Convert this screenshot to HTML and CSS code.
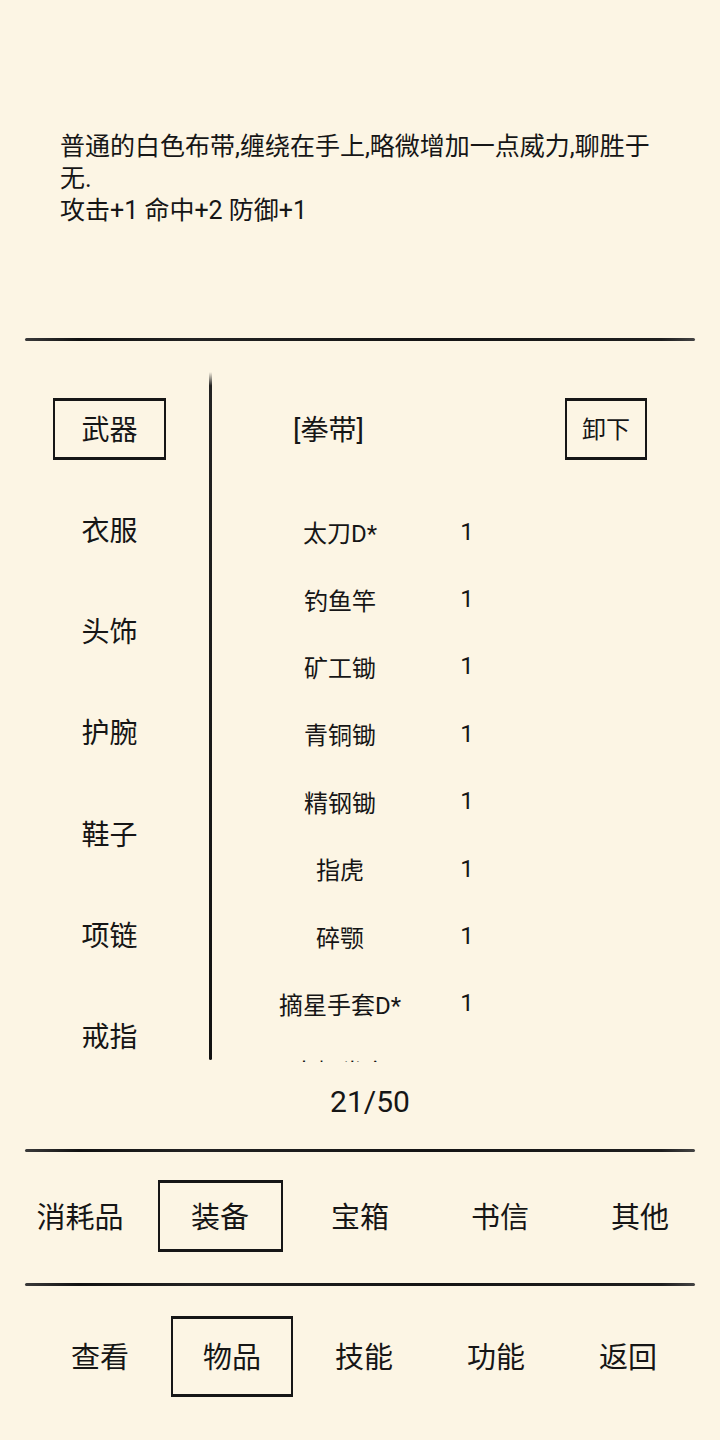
FILE: index.html
```html
<!DOCTYPE html>
<html lang="zh">
<head>
<meta charset="utf-8">
<title>装备</title>
<link rel="stylesheet" href="styles.css">
</head>
<body>
<div class="screen">
  <div class="desc">
    <p>普通的白色布带,缠绕在手上,略微增加一点威力,聊胜于无.</p>
    <p>攻击+1 命中+2 防御+1</p>
  </div>
  <div class="rule"></div>
  <div class="main">
    <div class="panes">
      <div class="cats">
        <div class="cat active">武器</div>
        <div class="cat">衣服</div>
        <div class="cat">头饰</div>
        <div class="cat">护腕</div>
        <div class="cat">鞋子</div>
        <div class="cat">项链</div>
        <div class="cat">戒指</div>
      </div>
      <div class="vline"></div>
      <div class="right">
        <div class="head">
          <span class="equipped">[拳带]</span>
          <span class="btn">卸下</span>
        </div>
        <div class="list">
          <div class="row"><span class="name">太刀D*</span><span class="cnt">1</span></div>
          <div class="row"><span class="name">钓鱼竿</span><span class="cnt">1</span></div>
          <div class="row"><span class="name">矿工锄</span><span class="cnt">1</span></div>
          <div class="row"><span class="name">青铜锄</span><span class="cnt">1</span></div>
          <div class="row"><span class="name">精钢锄</span><span class="cnt">1</span></div>
          <div class="row"><span class="name">指虎</span><span class="cnt">1</span></div>
          <div class="row"><span class="name">碎颚</span><span class="cnt">1</span></div>
          <div class="row"><span class="name">摘星手套D*</span><span class="cnt">1</span></div>
          <div class="row"><span class="name">太极拳套</span><span class="cnt">1</span></div>
        </div>
      </div>
    </div>
    <div class="counter">21/50</div>
  </div>
  <div class="rule"></div>
  <div class="tabs tabs1">
    <div class="tab">消耗品</div>
    <div class="tab active">装备</div>
    <div class="tab">宝箱</div>
    <div class="tab">书信</div>
    <div class="tab">其他</div>
  </div>
  <div class="rule"></div>
  <div class="tabs tabs2">
    <div class="tab">查看</div>
    <div class="tab active">物品</div>
    <div class="tab">技能</div>
    <div class="tab">功能</div>
    <div class="tab">返回</div>
  </div>
</div>
</body>
</html>
```

FILE: styles.css
```css
html, body {
  margin: 0;
  padding: 0;
  background: #fcf5e4;
}
body {
  font-family: Roboto, "Noto Sans CJK SC", sans-serif;
  color: #161616;
}
.screen {
  width: 720px;
  height: 1440px;
  overflow: hidden;
  background: #fcf5e4;
}
.desc {
  box-sizing: border-box;
  height: 338px;
  padding: 131px 0 0 60px;
  width: 660px;
  font-size: 25px;
  line-height: 32px;
}
.desc p {
  margin: 0;
}
.rule {
  height: 3px;
  margin: 0 25px;
  background: linear-gradient(90deg, #3a3a3a 0%, #111 8%, #222 25%, #141414 60%, #1e1e1e 95%, #444 100%);
  border-radius: 2px;
}
.main {
  padding-top: 31px;
}
.panes {
  display: flex;
  height: 691px;
}
.cats {
  box-sizing: border-box;
  width: 209px;
  padding: 26px 0 0 10px;
  display: flex;
  flex-direction: column;
  align-items: center;
  gap: 39.3px;
}
.cat {
  box-sizing: border-box;
  width: 113px;
  height: 62px;
  padding-bottom: 3px;
  display: flex;
  align-items: center;
  justify-content: center;
  font-size: 28px;
  flex: none;
}
.cat.active,
.btn,
.tab.active {
  border: 2px solid #161616;
  border-top-width: 3px;
  border-bottom-width: 3px;
}
.vline {
  width: 3px;
  height: 688px;
  background: linear-gradient(180deg, #fcf5e4 0%, #222 2%, #111 100%);
  border-radius: 0 0 2px 2px;
  flex: none;
}
.right {
  flex: 1;
  display: flex;
  flex-direction: column;
}
.head {
  margin-top: 26px;
  height: 62px;
  display: flex;
  align-items: center;
  padding-left: 81px;
}
.equipped {
  font-size: 28px;
  width: 272px;
  margin-top: -3px;
}
.btn {
  box-sizing: border-box;
  width: 82px;
  height: 62px;
  padding-bottom: 3px;
  display: flex;
  align-items: center;
  justify-content: center;
  font-size: 24px;
}
.list {
  flex: 1;
  overflow: hidden;
  padding-top: 38px;
  margin-bottom: 1px;
  box-sizing: border-box;
}
.row {
  display: grid;
  grid-template-columns: 180px 74px;
  padding-left: 38px;
  height: 67.4px;
  align-items: center;
  font-size: 24px;
}
.name, .cnt {
  text-align: center;
}
.counter {
  height: 86px;
  line-height: 78px;
  margin-left: 20px;
  text-align: center;
  font-size: 30px;
}
.tabs {
  display: grid;
  grid-template-columns: repeat(5, 1fr);
  justify-items: center;
  align-items: start;
  box-sizing: border-box;
}
.tabs1 {
  height: 131px;
  padding: 28px 10px 0;
}
.tabs1 .tab {
  width: 125px;
  height: 72px;
}
.tabs2 {
  height: 154px;
  padding: 30px 26px 0 34px;
}
.tabs2 .tab {
  width: 122px;
  height: 81px;
}
.tab {
  box-sizing: border-box;
  padding-bottom: 3px;
  display: flex;
  align-items: center;
  justify-content: center;
  font-size: 29px;
}
```
